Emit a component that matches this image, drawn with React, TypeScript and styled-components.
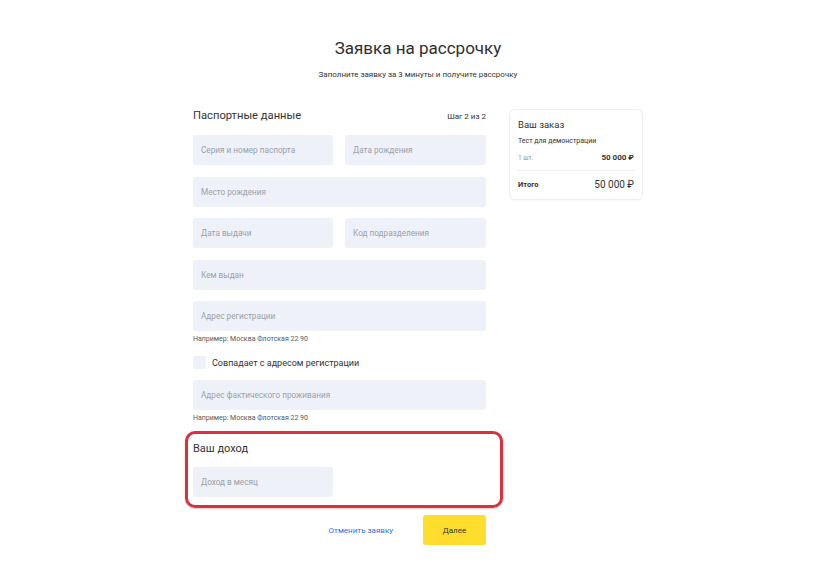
import React from "react";
import styled, { createGlobalStyle } from "styled-components";

const Global = createGlobalStyle`
  html, body { margin: 0; padding: 0; background: #ffffff; }
  body { font-family: Roboto, "Noto Sans", Arial, sans-serif; color: #333333; }
  * { box-sizing: border-box; }
`;

const Page = styled.div`
  width: 450px;
  margin-left: 193px;
  padding-top: 36px;
`;

const Title = styled.h1`
  margin: 0;
  font-size: 17px;
  line-height: 24px;
  font-weight: 400;
  text-align: center;
  color: #2f2f2f;
`;

const Subtitle = styled.p`
  margin: 9px 0 0;
  font-size: 8px;
  line-height: 12px;
  text-align: center;
  color: #333333;
`;

const Columns = styled.div`
  display: flex;
  gap: 23px;
  margin-top: 27px;
  align-items: flex-start;
`;

const FormCol = styled.div`
  width: 293px;
  display: flex;
  flex-direction: column;
`;

const HeadRow = styled.div`
  display: flex;
  justify-content: space-between;
  align-items: center;
  height: 16px;
  margin-bottom: 11px;
`;

const SectionTitle = styled.h2`
  margin: 0;
  font-size: 11.2px;
  line-height: 16px;
  font-weight: 400;
  color: #333333;
`;

const Step = styled.span`
  font-size: 8px;
  color: #333333;
`;

const Fields = styled.div`
  display: flex;
  flex-direction: column;
  gap: 11.5px;
`;

const Pair = styled.div`
  display: grid;
  grid-template-columns: 140px 141px;
  column-gap: 12px;
`;

const Input = styled.div<{ $w?: number }>`
  height: 30px;
  width: ${(p) => (p.$w ? `${p.$w}px` : "100%")};
  background: #eef1f7;
  border-radius: 3px;
  display: flex;
  align-items: center;
  padding-left: 8px;
  font-size: 8.2px;
  color: #9aa1ab;
`;

const Hint = styled.div`
  margin-top: 3px;
  font-size: 7px;
  line-height: 10px;
  color: #555a61;
`;

const CheckRow = styled.label`
  display: flex;
  align-items: center;
  gap: 6px;
  margin: 12px 0 11px;
  height: 13px;
  font-size: 9px;
  color: #333333;
`;

const Box = styled.span`
  width: 13px;
  height: 13px;
  border-radius: 2px;
  background: #eef1f7;
`;

const Highlight = styled.section`
  margin: 8px -17px 0 -8px;
  padding: 7px 17px 8px 5px;
  border: 3px solid #d8323f;
  border-radius: 10px;
  box-shadow: 0 1px 2px rgba(120, 20, 30, 0.25);
`;

const IncomeTitle = styled.h3`
  margin: 0 0 10px;
  font-size: 11px;
  line-height: 16px;
  font-weight: 400;
  color: #333333;
`;

const Actions = styled.div`
  display: flex;
  justify-content: flex-end;
  align-items: center;
  gap: 30px;
  margin-top: 7px;
`;

const CancelLink = styled.a`
  font-size: 8px;
  color: #336fee;
  text-decoration: none;
`;

const NextButton = styled.button`
  width: 63px;
  height: 30px;
  border: none;
  border-radius: 3px;
  background: #ffdd2d;
  font-family: inherit;
  font-size: 8px;
  color: #333333;
`;

const Card = styled.aside`
  width: 134px;
  margin-top: 1px;
  border: 1px solid #eceef1;
  border-radius: 6px;
  padding: 8px 8px 9px;
  box-shadow: 0 1px 3px rgba(0, 0, 0, 0.04);
`;

const CardTitle = styled.div`
  font-size: 9.5px;
  line-height: 14px;
  color: #333333;
`;

const Product = styled.div`
  margin-top: 4px;
  font-size: 7px;
  line-height: 10px;
  color: #333333;
`;

const Line = styled.div<{ $total?: boolean }>`
  display: flex;
  justify-content: space-between;
  align-items: center;
  margin-top: ${(p) => (p.$total ? "0" : "7px")};
  padding: ${(p) => (p.$total ? "8px 0 0" : "0 0 8px")};
  border-bottom: ${(p) => (p.$total ? "none" : "1px solid #eef0f3")};
`;

const Qty = styled.span`
  font-size: 6.5px;
  color: #8c8f94;
`;

const Price = styled.span<{ $big?: boolean }>`
  font-size: ${(p) => (p.$big ? "10px" : "8px")};
  font-weight: ${(p) => (p.$big ? 400 : 700)};
  color: #333333;
`;

const TotalLabel = styled.span`
  font-size: 7.5px;
  font-weight: 700;
  color: #333333;
`;

export default function App() {
  return (
    <>
      <Global />
      <Page>
        <Title>Заявка на рассрочку</Title>
        <Subtitle>Заполните заявку за 3 минуты и получите рассрочку</Subtitle>
        <Columns>
          <FormCol>
            <HeadRow>
              <SectionTitle>Паспортные данные</SectionTitle>
              <Step>Шаг 2 из 2</Step>
            </HeadRow>
            <Fields>
              <Pair>
                <Input>Серия и номер паспорта</Input>
                <Input>Дата рождения</Input>
              </Pair>
              <Input>Место рождения</Input>
              <Pair>
                <Input>Дата выдачи</Input>
                <Input>Код подразделения</Input>
              </Pair>
              <Input>Кем выдан</Input>
              <Input>Адрес регистрации</Input>
            </Fields>
            <Hint>Например: Москва Флотская 22 90</Hint>
            <CheckRow>
              <Box />
              Совпадает с адресом регистрации
            </CheckRow>
            <Input>Адрес фактического проживания</Input>
            <Hint>Например: Москва Флотская 22 90</Hint>
            <Highlight>
              <IncomeTitle>Ваш доход</IncomeTitle>
              <Input $w={140}>Доход в месяц</Input>
            </Highlight>
            <Actions>
              <CancelLink href="#">Отменить заявку</CancelLink>
              <NextButton>Далее</NextButton>
            </Actions>
          </FormCol>
          <Card>
            <CardTitle>Ваш заказ</CardTitle>
            <Product>Тест для демонстрации</Product>
            <Line>
              <Qty>1 шт.</Qty>
              <Price>50 000 ₽</Price>
            </Line>
            <Line $total>
              <TotalLabel>Итого</TotalLabel>
              <Price $big>50 000 ₽</Price>
            </Line>
          </Card>
        </Columns>
      </Page>
    </>
  );
}
